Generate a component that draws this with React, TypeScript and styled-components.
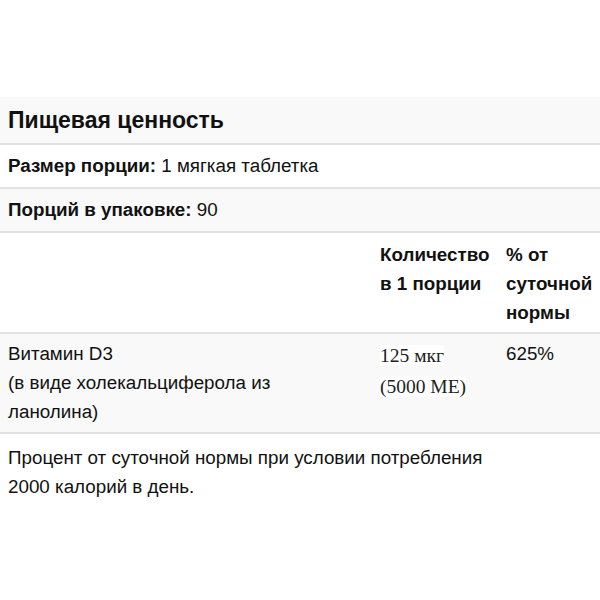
import React from "react";
import styled, { createGlobalStyle } from "styled-components";

const Global = createGlobalStyle`
  html, body { margin: 0; padding: 0; background: #fff; }
  body { font-family: "Liberation Sans", Arial, sans-serif; color: #111; }
`;

const Page = styled.div`
  padding-top: 97px;
  width: 600px;
`;

const Title = styled.div`
  height: 48px;
  box-sizing: border-box;
  padding: 0 8px;
  display: flex;
  align-items: center;
  font-size: 23px;
  font-weight: 700;
  background: #f9f9f9;
  border-bottom: 2px solid #e2e2e2;
`;

const InfoRow = styled.div<{ $shade?: boolean }>`
  height: 44px;
  box-sizing: border-box;
  padding: 0 8px;
  display: flex;
  align-items: center;
  font-size: 18.8px;
  background: ${(p) => (p.$shade ? "#f9f9f9" : "#fff")};
  border-bottom: 2px solid #e2e2e2;
  b { font-weight: 700; }
`;

const GridRow = styled.div<{ $shade?: boolean; $height: number; $top: number }>`
  display: grid;
  grid-template-columns: 372px 126px 1fr;
  height: ${(p) => p.$height}px;
  box-sizing: border-box;
  padding: ${(p) => p.$top}px 8px 0;
  font-size: 18.8px;
  line-height: 29px;
  background: ${(p) => (p.$shade ? "#f9f9f9" : "#fff")};
  border-bottom: 2px solid #e2e2e2;
`;

const HeadCell = styled.div`
  font-weight: 700;
`;

const Cell = styled.div``;

const SerifCell = styled.div`
  font-family: "Liberation Serif", "Times New Roman", serif;
  font-size: 19.5px;
  line-height: 31px;
  padding-top: 1px;
  color: #222;
  span { background: #fff; }
`;

const Note = styled.div`
  padding: 9px 8px;
  font-size: 18.8px;
  line-height: 29px;
`;

export default function App() {
  return (
    <>
      <Global />
      <Page>
        <Title>Пищевая ценность</Title>
        <InfoRow>
          <span>
            <b>Размер порции:</b> 1 мягкая таблетка
          </span>
        </InfoRow>
        <InfoRow $shade>
          <span>
            <b>Порций в упаковке:</b> 90
          </span>
        </InfoRow>
        <GridRow $height={101} $top={7}>
          <HeadCell />
          <HeadCell>
            Количество
            <br />в 1 порции
          </HeadCell>
          <HeadCell>
            % от
            <br />
            суточной
            <br />
            нормы
          </HeadCell>
        </GridRow>
        <GridRow $shade $height={100} $top={5}>
          <Cell>
            Витамин D3
            <br />
            (в виде холекальциферола из
            <br />
            ланолина)
          </Cell>
          <SerifCell>
            <span>125 мкг</span>
            <br />
            <span>(5000 МЕ)</span>
          </SerifCell>
          <Cell>625%</Cell>
        </GridRow>
        <Note>
          Процент от суточной нормы при условии потребления
          <br />
          2000 калорий в день.
        </Note>
      </Page>
    </>
  );
}
